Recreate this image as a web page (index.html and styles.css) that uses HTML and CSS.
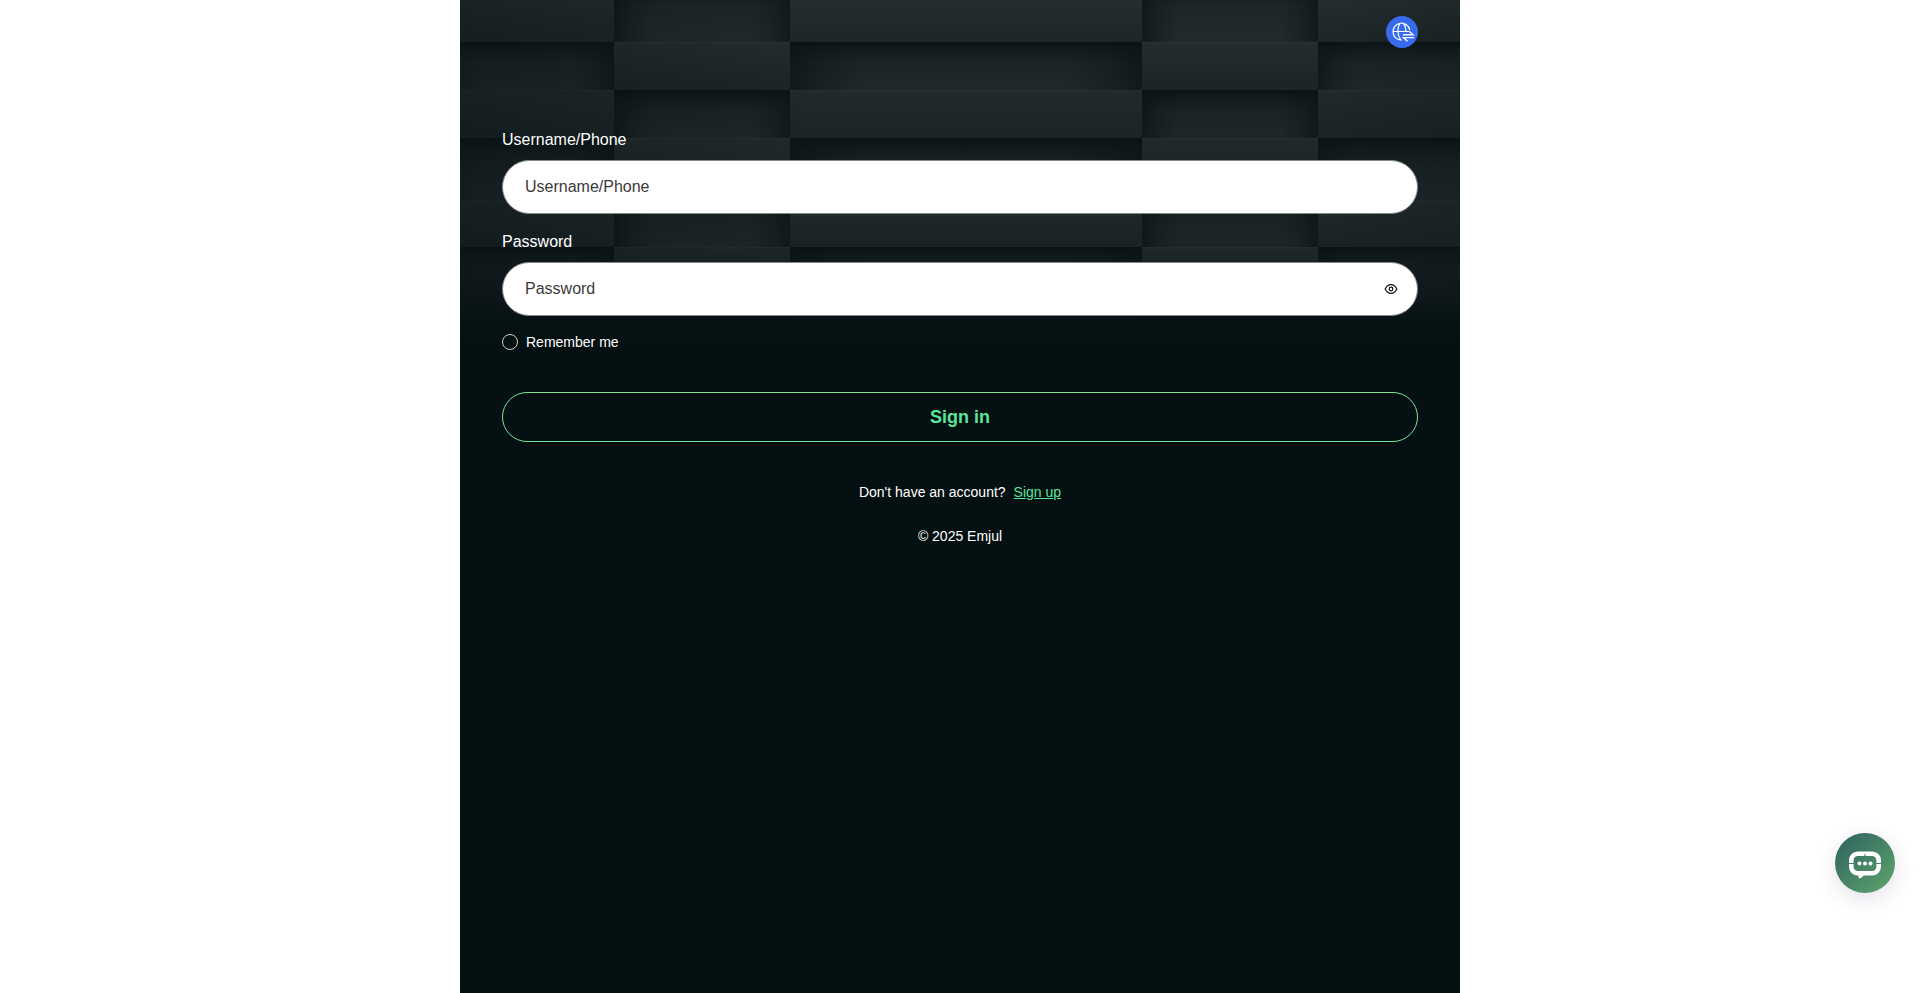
FILE: index.html
```
<!DOCTYPE html>
<html lang="en">
<head>
  <meta charset="UTF-8" />
  <meta name="viewport" content="width=device-width, initial-scale=1.0" />
  <title>Emjul</title>
  <link rel="stylesheet" href="styles.css">
</head>
<body>
  <div class="page">
    <!-- Block wall -->
    <svg class="wall" viewBox="0 0 1000 350" preserveAspectRatio="none" aria-hidden="true">
      <defs>
        <linearGradient id="up" x1="0" y1="0" x2="0" y2="1">
          <stop offset="0" stop-color="#262e30" />
          <stop offset="1" stop-color="#1f2729" />
        </linearGradient>
        <linearGradient id="down" x1="0" y1="0" x2="0" y2="1">
          <stop offset="0" stop-color="#0b1316" />
          <stop offset="0.18" stop-color="#151d20" />
          <stop offset="0.45" stop-color="#1e2628" />
          <stop offset="1" stop-color="#242c2e" />
        </linearGradient>
        <linearGradient id="edges" x1="0" y1="0" x2="1" y2="0">
          <stop offset="0" stop-color="#0b1316" stop-opacity="0.7" />
          <stop offset="0.1" stop-color="#0b1316" stop-opacity="0.3" />
          <stop offset="0.22" stop-color="#0b1316" stop-opacity="0" />
          <stop offset="0.78" stop-color="#0b1316" stop-opacity="0" />
          <stop offset="0.9" stop-color="#0b1316" stop-opacity="0.3" />
          <stop offset="1" stop-color="#0b1316" stop-opacity="0.7" />
        </linearGradient>
        <radialGradient id="joint" cx="0.5" cy="0" r="0.2">
          <stop offset="0" stop-color="#0b1316" stop-opacity="0.7" />
          <stop offset="1" stop-color="#0b1316" stop-opacity="0" />
        </radialGradient>
        <linearGradient id="side" x1="0" y1="0" x2="1" y2="0">
          <stop offset="0" stop-color="#081114" stop-opacity="0.4" />
          <stop offset="0.35" stop-color="#081114" stop-opacity="0" />
          <stop offset="0.85" stop-color="#081114" stop-opacity="0" />
          <stop offset="1" stop-color="#081114" stop-opacity="0.2" />
        </linearGradient>
        <linearGradient id="shade" x1="0" y1="0" x2="0" y2="1">
          <stop offset="0" stop-color="#051012" stop-opacity="0" />
          <stop offset="0.3" stop-color="#051012" stop-opacity="0.15" />
          <stop offset="0.7" stop-color="#051012" stop-opacity="0.2" />
          <stop offset="0.8" stop-color="#051012" stop-opacity="0.5" />
          <stop offset="0.92" stop-color="#051012" stop-opacity="0.92" />
          <stop offset="1" stop-color="#051012" />
        </linearGradient>
        <g id="raised">
          <rect width="176" height="48" fill="url(#up)" />
          <rect width="176" height="1" fill="#2c3436" />
        </g>
        <g id="sunk">
          <rect width="176" height="48" fill="url(#down)" />
          <rect width="176" height="48" fill="url(#edges)" />
        </g>
        <g id="wide-sunk">
          <rect width="352" height="48" fill="url(#down)" />
          <rect width="352" height="48" fill="url(#edges)" />
          <rect x="76" width="200" height="48" fill="url(#joint)" />
        </g>
        <g id="col-a">
          <use href="#raised" y="-6" />
          <use href="#sunk" y="42" />
          <use href="#raised" y="90" />
          <use href="#sunk" transform="translate(0 138) scale(1 1.3)" />
          <use href="#raised" y="200" />
          <use href="#sunk" y="247" />
          <use href="#raised" y="295" />
        </g>
        <g id="col-b">
          <use href="#sunk" transform="translate(0 -22) scale(1 1.35)" />
          <use href="#raised" y="42" />
          <use href="#sunk" y="90" />
          <use href="#raised" y="138" />
          <use href="#sunk" transform="translate(0 186) scale(1 1.3)" />
          <use href="#raised" y="247" />
          <use href="#sunk" y="295" />
        </g>
      </defs>
      <use href="#col-a" x="-22" />
      <use href="#col-b" x="154" />
      <use href="#col-a" x="330" />
      <use href="#col-a" x="506" />
      <use href="#wide-sunk" x="330" y="42" />
      <use href="#wide-sunk" transform="translate(330 138) scale(1 1.3)" />
      <use href="#wide-sunk" x="330" y="247" />
      <use href="#col-b" x="682" />
      <use href="#col-a" x="858" />
      <rect width="1000" height="350" fill="url(#side)" />
      <rect width="1000" height="350" fill="url(#shade)" />
    </svg>

    <header class="header">
      <button class="lang" type="button" aria-label="Language">
        <svg viewBox="0 0 32 32" width="32" height="32" fill="none" stroke="#fff">
          <path stroke-width="1.200" d="M23.800 14A8.500 8.500 0 1 0 15.500 24.200M7 15.500H23.500M14 7.300C11 12 11 19 14.800 24M17.500 7.300C19.500 10 20 13 19.800 16" />
          <path stroke-width="1.400" d="M17 18.800H27L23.500 15.600M28 21.600H17.500L21.500 25.200" />
        </svg>
      </button>
    </header>

    <form class="form">
      <label class="label" for="username">Username/Phone</label>
      <div class="field">
        <input type="text" id="username" placeholder="Username/Phone" />
      </div>

      <label class="label" for="password">Password</label>
      <div class="field">
        <input type="password" id="password" placeholder="Password" />
        <button class="eye" type="button" aria-label="Show password">
          <svg viewBox="0 0 14 14" width="14" height="14" fill="none" stroke="#111" stroke-width="1.2">
            <path d="M1.200 7C2.500 4 4.500 2.600 7 2.600S11.500 4 12.800 7C11.500 10 9.500 11.400 7 11.400S2.500 10 1.200 7Z" />
            <circle cx="7" cy="7" r="1.800" />
          </svg>
        </button>
      </div>

      <div class="remember">
        <input type="checkbox" id="remember" />
        <label for="remember">Remember me</label>
      </div>

      <button class="submit" type="submit">Sign in</button>
    </form>

    <p class="signup">Don't have an account? <a href="#">Sign up</a></p>
    <footer class="footer">© 2025 Emjul</footer>
  </div>

  <button class="chat" type="button" aria-label="Chat">
    <svg viewBox="0 0 32 28" width="32" height="28">
      <rect x="2.300" y="2.800" width="27.400" height="19.400" rx="6.500" fill="none" stroke="#fff" stroke-width="4.600" />
      <path d="M9 23h8c-2 0-4 4.500-6.500 4.500C9.500 27.500 9.500 25 9 23Z" fill="#fff" />
      <path d="M0 12.500h5M27 12.500h5M16 3v3" stroke="#3f7f66" stroke-width="1" />
      <g fill="#fff">
        <circle cx="10.500" cy="12.500" r="2" />
        <circle cx="16" cy="12.500" r="2" />
        <circle cx="21.500" cy="12.500" r="2" />
      </g>
    </svg>
  </button>
</body>
</html>
```

FILE: styles.css
```
* {
  box-sizing: border-box;
}
body {
  margin: 0;
  font-family: "Liberation Sans", Arial, sans-serif;
  background-color: #fff;
  color: #fff;
}
button {
  padding: 0;
  border: none;
  cursor: pointer;
}
svg {
  display: block;
}
.page {
  position: relative;
  max-width: 1000px;
  min-height: 100vh;
  margin: 0 auto;
  padding: 16px 42px;
  background-color: #051012;
}
.wall {
  position: absolute;
  top: 0;
  left: 0;
  width: 100%;
  height: 350px;
}
.header,
.form {
  position: relative;
}
.header {
  display: flex;
  justify-content: flex-end;
  margin-bottom: 80px;
}
.lang {
  width: 32px;
  height: 32px;
  border-radius: 50%;
  background-color: #386bec;
}
.form {
  display: flex;
  flex-direction: column;
}
.label {
  margin-bottom: 8px;
  font-size: 16px;
  line-height: 24px;
}
.field {
  display: flex;
  align-items: center;
  height: 54px;
  margin-bottom: 16px;
  padding: 0 19px 0 22px;
  border: 1px solid #888;
  border-radius: 27px;
  background-color: #fff;
}
.field input {
  flex: 1;
  min-width: 0;
  padding: 0;
  border: none;
  outline: none;
  background: none;
  font-family: inherit;
  font-size: 16px;
  color: #333;
}
.field input::placeholder {
  color: #3a3a3a;
  opacity: 1;
}
.eye {
  background: none;
}
.remember {
  display: flex;
  align-items: center;
  gap: 8px;
  margin-bottom: 40px;
  font-size: 14px;
  line-height: 20px;
}
.remember input {
  appearance: none;
  width: 16px;
  height: 16px;
  margin: 0;
  border: 1px solid #ccc;
  border-radius: 50%;
}
.remember input:checked {
  background-color: #5be49b;
}
.submit {
  height: 50px;
  border: 1px solid #78e79b;
  border-radius: 25px;
  background: none;
  font-family: inherit;
  font-size: 18px;
  font-weight: bold;
  color: #5be49b;
}
.signup {
  display: flex;
  justify-content: center;
  gap: 8px;
  margin: 40px 0 24px;
  font-size: 14px;
  line-height: 20px;
}
.signup a {
  color: #5be49b;
}
.footer {
  font-size: 14px;
  line-height: 20px;
  text-align: center;
}
.chat {
  position: fixed;
  right: 25px;
  bottom: 100px;
  display: flex;
  align-items: center;
  justify-content: center;
  width: 60px;
  height: 60px;
  padding-top: 4px;
  border-radius: 50%;
  background: linear-gradient(135deg, #2f6060, #5fa66c);
  box-shadow: 0 6px 20px rgba(60, 60, 110, 0.15);
}
```
